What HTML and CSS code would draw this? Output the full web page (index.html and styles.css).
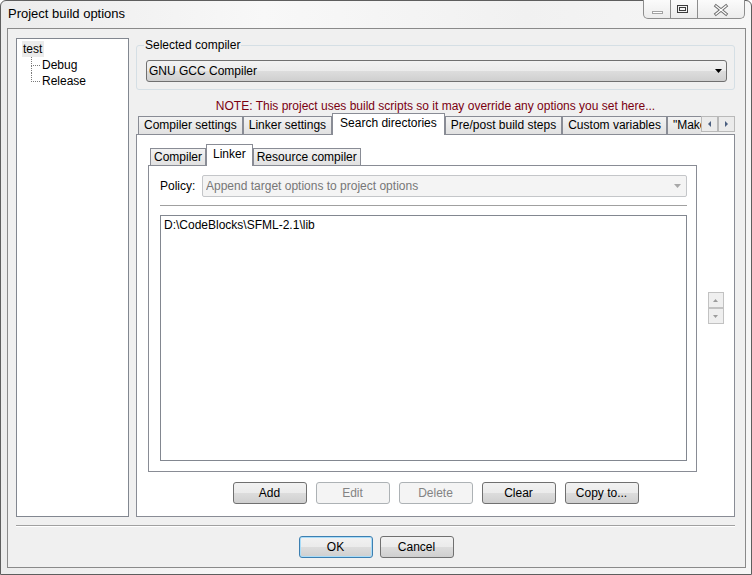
FILE: index.html
```html
<!DOCTYPE html>
<html lang="en">
<head>
<meta charset="UTF-8" />
<title>Project build options</title>
<link rel="stylesheet" href="styles.css">
</head>
<body>

<div class="window">
  <div class="titlebar">
    <span class="title">Project build options</span>
    <div class="caption">
      <span class="cap-btn cap-min">
        <svg width="26" height="18"><rect x="8.5" y="11.5" width="10" height="2" fill="#fff" stroke="#a3a3a3"/></svg>
      </span>
      <span class="cap-btn cap-max">
        <svg width="26" height="18"><rect x="6.5" y="5.5" width="10" height="7" fill="none" stroke="#3c3c3c"/><rect x="8.5" y="7.5" width="6" height="3" fill="none" stroke="#3c3c3c"/></svg>
      </span>
      <span class="cap-btn cap-close">
        <svg width="46" height="18"><path d="M18 6 L28 14 M28 6 L18 14" stroke="#6f6f6f" stroke-width="3.2" stroke-linecap="square"/><path d="M18 6 L28 14 M28 6 L18 14" stroke="#fff" stroke-width="1.3" stroke-linecap="square"/></svg>
      </span>
    </div>
  </div>

  <div class="client">
    <div class="main">
      <div class="tree">
        <div><span class="tree-root">test</span></div>
        <div class="tree-item">
          <span class="branch"><span class="branch-top"></span><span class="branch-rest"></span></span>
          <span class="tree-label">Debug</span>
        </div>
        <div class="tree-item last">
          <span class="branch"><span class="branch-top"></span><span class="branch-rest"></span></span>
          <span class="tree-label">Release</span>
        </div>
      </div>

      <div class="right">
        <fieldset class="group">
          <legend>Selected compiler</legend>
          <div class="combo">
            <span class="combo-text">GNU GCC Compiler</span>
            <svg width="7" height="4"><path d="M0 0h7L3.5 4z" fill="#000"/></svg>
          </div>
        </fieldset>

        <p class="note">NOTE: This project uses build scripts so it may override any options you set here...</p>

        <div class="tabstrip">
          <div class="tabs">
            <span class="tab">Compiler settings</span>
            <span class="tab">Linker settings</span>
            <span class="tab active">Search directories</span>
            <span class="tab">Pre/post build steps</span>
            <span class="tab">Custom variables</span>
            <span class="tab">"Make" commands</span>
          </div>
          <div class="tab-scroll">
            <span class="scroll-btn"><svg width="4" height="6"><path d="M3 0v6L0 3z" fill="#4a5f80"/></svg></span>
            <span class="scroll-btn"><svg width="4" height="6"><path d="M0 0v6L3 3z" fill="#4a5f80"/></svg></span>
          </div>
        </div>

        <div class="page">
          <div class="page-row">
            <div class="sub-notebook">
              <div class="subtabs">
                <span class="subtab">Compiler</span>
                <span class="subtab active">Linker</span>
                <span class="subtab">Resource compiler</span>
              </div>
              <div class="subpage">
                <div class="policy-row">
                  <span class="policy-label">Policy:</span>
                  <div class="combo disabled">
                    <span class="combo-text">Append target options to project options</span>
                    <svg width="7" height="4"><path d="M0 0h7L3.5 4z" fill="#a8a8a8"/></svg>
                  </div>
                </div>
                <div class="rule"></div>
                <div class="listbox">
                  <div class="list-item">D:\CodeBlocks\SFML-2.1\lib</div>
                </div>
              </div>
            </div>
            <div class="spin">
              <span class="spin-btn"><svg width="5" height="3"><path d="M0 3h5L2.5 0z" fill="#9c9c9c"/></svg></span>
              <span class="spin-btn"><svg width="5" height="3"><path d="M0 0h5L2.5 3z" fill="#9c9c9c"/></svg></span>
            </div>
          </div>

          <div class="btn-row">
            <button class="btn">Add</button>
            <button class="btn" disabled>Edit</button>
            <button class="btn" disabled>Delete</button>
            <button class="btn">Clear</button>
            <button class="btn">Copy to...</button>
          </div>
        </div>
      </div>
    </div>

    <div class="footer-rule"></div>
    <div class="footer">
      <button class="btn default">OK</button>
      <button class="btn">Cancel</button>
    </div>
  </div>
</div>

</body>
</html>
```

FILE: styles.css
```css
body {
  margin: 0;
  font-family: "Liberation Sans", Arial, sans-serif;
  font-size: 12px;
  color: #000;
  background: #fff;
}

.window {
  width: 752px;
  height: 575px;
  box-sizing: border-box;
  border: 1px solid #5e5e5e;
  border-radius: 6px 6px 0 0;
  padding: 0 5px 6px 6px;
  background: linear-gradient(to right, #ececec, #f8f8f8 35%, #f1f1f1 70%, #f6f6f6);
  display: flex;
  flex-direction: column;
}

/* title bar */
.titlebar {
  height: 27px;
  display: flex;
  align-items: flex-start;
}

.title {
  font-size: 13px;
  line-height: 16px;
  padding-top: 5px;
  padding-left: 1px;
}

.caption {
  margin: -1px 1px 0 auto;
  display: flex;
  height: 19px;
  box-sizing: border-box;
  border: 1px solid #8d8d8d;
  border-top: none;
  border-radius: 0 0 5px 5px;
  overflow: hidden;
  background: linear-gradient(#fbfbfb, #ececec);
}

.cap-btn {
  display: block;
  height: 18px;
}

.cap-btn svg {
  display: block;
}

.cap-min,
.cap-max {
  width: 26px;
  border-right: 1px solid #8d8d8d;
}

.cap-close {
  width: 46px;
}

/* client area */
.client {
  height: 540px;
  box-sizing: border-box;
  border: 1px solid #8a8a8a;
  background: #f0f0f0;
  padding: 9px 10px 9px 8px;
  display: flex;
  flex-direction: column;
}

.main {
  height: 479px;
  display: flex;
  gap: 7px;
}

/* tree */
.tree {
  width: 113px;
  box-sizing: border-box;
  border: 1px solid #828790;
  background: #fff;
  padding: 2px 0 0 4px;
  line-height: 16px;
}

.tree-root {
  display: inline-block;
  margin-left: 1px;
  padding: 0 2px 0 1px;
  background: #ebebeb;
}

.tree-item {
  display: flex;
  height: 16px;
  padding-left: 10px;
}

.branch {
  width: 9px;
  display: flex;
  flex-direction: column;
}

.branch-top {
  height: 8px;
  border-left: 1px dotted #7a7a7a;
  border-bottom: 1px dotted #7a7a7a;
}

.branch-rest {
  flex: 1;
  border-left: 1px dotted #7a7a7a;
}

.tree-item.last .branch-rest {
  border-left: none;
}

.tree-label {
  margin-left: 2px;
}

/* right side */
.right {
  flex: 1;
  min-width: 0;
  display: flex;
  flex-direction: column;
}

.group {
  margin: 0;
  padding: 0 7px 7px 9px;
  border: 1px solid #d5dfe5;
  border-radius: 3px;
  min-width: 0;
}

.group legend {
  padding: 0 1px;
  margin-left: -2px;
  line-height: 15px;
}

.combo {
  height: 22px;
  box-sizing: border-box;
  margin-top: 7px;
  border: 1px solid #707070;
  border-radius: 3px;
  background: linear-gradient(#f2f2f2 0%, #ebebeb 49%, #dddddd 50%, #cfcfcf 100%);
  display: flex;
  align-items: center;
  padding: 0 4px 0 2px;
}

.combo-text {
  flex: 1;
  white-space: nowrap;
  overflow: hidden;
}

.combo svg {
  display: block;
}

.combo.disabled {
  margin-top: 0;
  border-color: #c4c6c9;
  border-radius: 2px;
  background: #f4f4f4;
  color: #777;
  padding: 0 5px 0 3px;
}

.note {
  margin: 9px 0 0;
  line-height: 14px;
  text-align: center;
  color: #7a0010;
  white-space: nowrap;
}

/* outer notebook */
.tabstrip {
  height: 22px;
  margin-bottom: -1px;
  display: flex;
  position: relative;
  z-index: 1;
}

.tabs {
  flex: 1;
  min-width: 0;
  display: flex;
  align-items: flex-end;
  overflow: hidden;
  padding-left: 2px;
}

.tab,
.subtab {
  flex-shrink: 0;
  box-sizing: border-box;
  border: 1px solid #898c95;
  border-bottom: none;
  background: linear-gradient(#f3f3f3, #e1e1e1);
  white-space: nowrap;
}

.tab {
  height: 18px;
  margin-bottom: 1px;
  padding: 0 5px;
  line-height: 17px;
}

.tab.active,
.subtab.active {
  height: 22px;
  margin-bottom: 0;
  background: #fff;
  line-height: 19px;
}

.tab.active {
  padding: 0 7px;
}

.tab-scroll {
  display: flex;
  margin-top: 3px;
  align-self: flex-start;
}

.scroll-btn {
  width: 17px;
  height: 16px;
  box-sizing: border-box;
  border: 1px solid #b9b9b9;
  background: #ebebeb;
  display: flex;
  align-items: center;
  justify-content: center;
}

.scroll-btn svg {
  display: block;
}

.page {
  flex: 1;
  border: 1px solid #898c95;
  background: #fff;
  padding: 9px 0 12px 0;
  display: flex;
  flex-direction: column;
  min-height: 0;
}

.page-row {
  flex: 1;
  display: flex;
  padding-left: 11px;
  min-height: 0;
}

/* inner notebook */
.sub-notebook {
  width: 549px;
  display: flex;
  flex-direction: column;
}

.subtabs {
  height: 22px;
  margin-bottom: -1px;
  padding-left: 2px;
  display: flex;
  align-items: flex-end;
  position: relative;
  z-index: 1;
}

.subtab {
  height: 17px;
  margin-bottom: 1px;
  padding: 0 3px;
  line-height: 16px;
}

.subtab.active {
  padding: 0 6px;
}

.subpage {
  flex: 1;
  border: 1px solid #898c95;
  background: #fff;
  padding: 9px 9px 10px 11px;
  display: flex;
  flex-direction: column;
}

.policy-row {
  display: flex;
  align-items: center;
}

.policy-label {
  width: 42px;
}

.policy-row .combo {
  flex: 1;
}

.rule {
  height: 1px;
  margin-top: 8px;
  background: #a0a0a0;
}

.listbox {
  flex: 1;
  margin-top: 9px;
  border: 1px solid #828790;
  background: #fff;
  padding: 2px 3px;
}

.list-item {
  line-height: 15px;
}

.spin {
  flex: 1;
  display: flex;
  flex-direction: column;
  align-items: center;
  justify-content: center;
}

.spin-btn {
  width: 16px;
  height: 16px;
  box-sizing: border-box;
  border: 1px solid #c2c2c2;
  background: #efefef;
  display: flex;
  align-items: center;
  justify-content: center;
}

.spin-btn svg {
  display: block;
}

/* buttons */
.btn-row {
  margin-top: 10px;
  display: flex;
  justify-content: center;
  gap: 9px;
}

.btn {
  width: 74px;
  height: 22px;
  box-sizing: border-box;
  margin: 0;
  padding: 0;
  border: 1px solid #707070;
  border-radius: 3px;
  background: linear-gradient(#f2f2f2 0%, #ebebeb 49%, #dddddd 50%, #cfcfcf 100%);
  font-family: inherit;
  font-size: 12px;
  line-height: 20px;
  color: #000;
}

.btn:disabled {
  border-color: #adb2b5;
  background: #f4f4f4;
  color: #838383;
}

.btn.default {
  border-color: #3c7fb1;
  box-shadow: inset 0 0 0 1px #a9dcf8;
}

.footer-rule {
  margin-top: 8px;
  border-top: 1px solid #a0a0a0;
  border-bottom: 1px solid #fff;
}

.footer {
  margin-top: 9px;
  padding-left: 1px;
  display: flex;
  justify-content: center;
  gap: 7px;
}
```
